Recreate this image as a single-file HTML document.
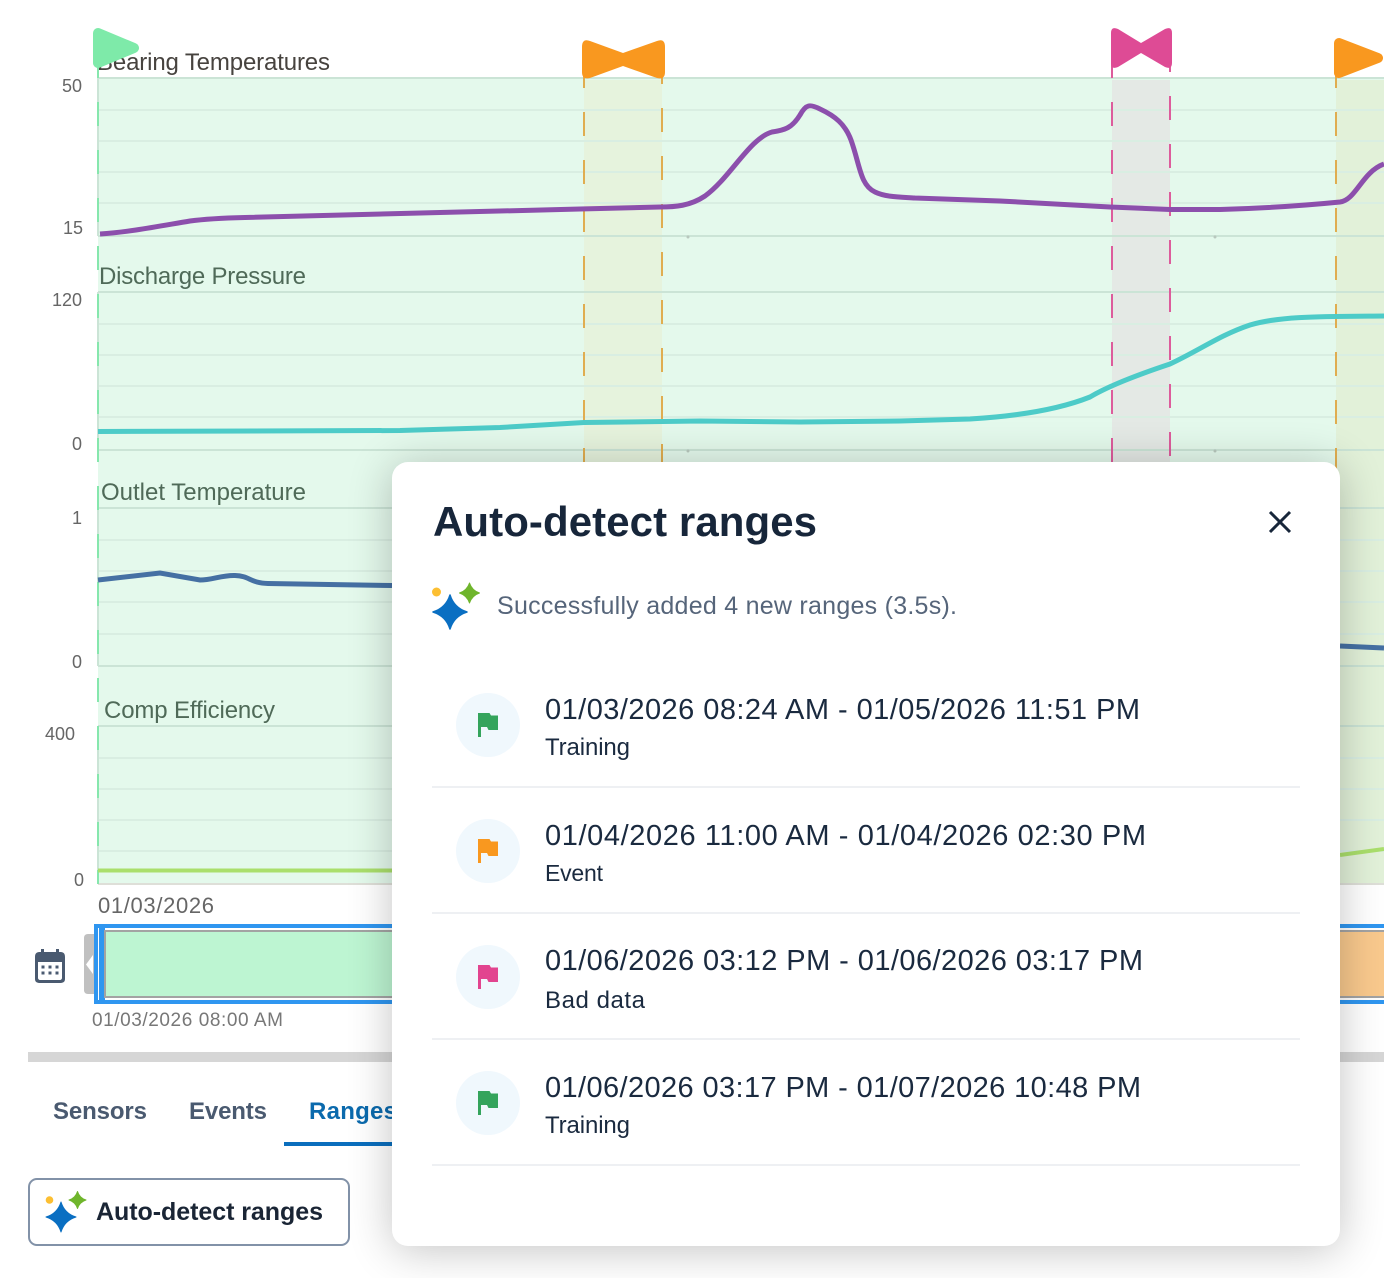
<!DOCTYPE html>
<html><head><meta charset="utf-8"><style>
html,body{margin:0;padding:0;background:#fff;width:1384px;height:1278px;overflow:hidden}
svg{position:absolute;left:0;top:0}
text{font-family:"Liberation Sans",sans-serif}
#modal{position:absolute;left:392px;top:462px;width:948px;height:784px;background:#fff;border-radius:16px;box-shadow:0 4px 44px rgba(0,0,0,.24)}
</style></head><body>
<svg width="1384" height="1278" viewBox="0 0 1384 1278">
<rect x="98" y="78" width="1286" height="806" fill="#e4f9ec"/>
<rect x="584" y="80" width="78" height="804" fill="#e6f3dd"/>
<rect x="1112" y="80" width="58" height="804" fill="#e4e9e5"/>
<rect x="1336" y="80" width="48" height="804" fill="#e2f1d9"/>
<g stroke="#d9eee2" stroke-width="2" fill="none">
<path d="M98 110H1384M98 141H1384M98 172H1384M98 203H1384"/>
<path d="M98 324H1384M98 355H1384M98 386H1384M98 417H1384"/>
<path d="M98 540H1384M98 571H1384M98 602H1384M98 634H1384"/>
<path d="M98 758H1384M98 789H1384M98 820H1384M98 851H1384"/>
</g>
<g stroke="#cbe4d6" stroke-width="2" fill="none">
<path d="M98 78H1384M98 236H1384M98 292H1384M98 450H1384M98 508H1384M98 666H1384M98 726H1384"/>
<path d="M98 78V236M98 292V450M98 508V666M98 726V884"/>
</g>
<path d="M98 884H1384" stroke="#dedfd8" stroke-width="2"/>
<path d="M98 54V884" stroke="#86e7ad" stroke-width="2" stroke-dasharray="24 24" fill="none"/>
<g fill="none" stroke-width="2">
<path d="M584 64V470" stroke="#e0ad50" stroke-dasharray="24 24"/>
<path d="M662 60V470" stroke="#e0ad50" stroke-dasharray="24 24"/>
<path d="M1336 64V470" stroke="#e0ad50" stroke-dasharray="24 24"/>
<path d="M1112 54V470" stroke="#dd5c9c" stroke-dasharray="24 24"/>
<path d="M1170 48V470" stroke="#dd5c9c" stroke-dasharray="24 24"/>
</g>
<path d="M100 234C130 232 160 226 190 221C205 219 225 218 245 217.500L580 209L660 207C675 207 690 206 705 196C730 178 750 138 772 132C785 130 792 128 800 115C806 104 810 104 820 109C835 116 845 124 851 140C860 165 860 185 875 192C885 197 900 197 915 198L1000 201L1110 207L1170 209.500L1220 209.500C1270 208 1310 205 1340 202C1356 200 1362 172 1384 164" fill="none" stroke="#8c4fac" stroke-width="5"/>
<path d="M98 431.500L400 430.500L500 427.500L584 422.500L700 421L800 422L900 421L970 419C1020 416 1060 409 1090 397C1110 385 1140 374 1170 364C1200 350 1220 335 1250 325C1280 316 1320 316.500 1384 316" fill="none" stroke="#4dcbc8" stroke-width="5"/>
<path d="M98 580L160 573L200 580C212 580 222 575 235 575.500C250 576 250 583 268 583.500L392 585.500M1340 646L1384 648" fill="none" stroke="#4570a3" stroke-width="5"/>
<path d="M98 870.500H392M1340 855L1384 849" fill="none" stroke="#aadf6c" stroke-width="4"/>
<circle cx="688" cy="237" r="1.500" fill="#b8c8be"/><circle cx="1215" cy="237" r="1.500" fill="#b8c8be"/>
<circle cx="688" cy="451" r="1.500" fill="#b8c8be"/><circle cx="1215" cy="451" r="1.500" fill="#b8c8be"/>

<text x="97" y="70" font-size="24" fill="#47433f" textLength="233">Bearing Temperatures</text>
<text x="99" y="284" font-size="24" fill="#4f6a58" textLength="207">Discharge Pressure</text>
<text x="101" y="500" font-size="24" fill="#4f6a58" textLength="205">Outlet Temperature</text>
<text x="104" y="718" font-size="24" fill="#4f6a58" textLength="171">Comp Efficiency</text>
<g font-size="18" fill="#666">
<text x="62" y="92" textLength="20">50</text>
<text x="63" y="234" textLength="20">15</text>
<text x="52" y="306" textLength="30">120</text>
<text x="72" y="450">0</text>
<text x="72" y="524">1</text>
<text x="72" y="668">0</text>
<text x="45" y="740" textLength="30">400</text>
<text x="74" y="886">0</text>
</g>
<text x="98" y="913" font-size="22" fill="#666" textLength="116">01/03/2026</text>

<path d="M98 33L134 48L98 63Z" fill="#7eeaa9" stroke="#7eeaa9" stroke-width="10" stroke-linejoin="round"/>
<path d="M582 47Q582 38 590 41L623 53L657 41Q665 38 665 47V72Q665 80 657 78L623 66L590 78Q582 80 582 72Z" fill="#f9981f"/>
<path d="M1111 33Q1111 26 1118 29L1141 43L1165 29Q1172 26 1172 33V63Q1172 70 1165 67L1141 53L1118 67Q1111 70 1111 63Z" fill="#de4b95"/>
<path d="M1339 43L1378 58L1339 73Z" fill="#f9981f" stroke="#f9981f" stroke-width="10" stroke-linejoin="round"/>

<!-- navigator -->
<path d="M94 934H88C85 934 84 936 84 938V990C84 992 85 994 88 994H94Z" fill="#c0c0c0"/>
<path d="M93 955L86 964.500L93 974Z" fill="#fff"/>
<rect x="94" y="924" width="1290" height="4" fill="#2f96f0"/>
<rect x="94" y="1000" width="1290" height="4" fill="#2f96f0"/>
<rect x="94" y="924" width="4" height="80" rx="1" fill="#2f96f0"/>
<rect x="99" y="924" width="6" height="80" fill="#2f96f0"/>
<rect x="104" y="930" width="1280" height="2" fill="#a3a3a3"/>
<rect x="104" y="996" width="1280" height="2" fill="#a3a3a3"/>
<rect x="104" y="930" width="2" height="68" fill="#a3a3a3"/>
<rect x="106" y="932" width="300" height="64" fill="#bdf5d2"/>
<rect x="1330" y="932" width="54" height="64" fill="#f9c98d"/>
<text x="92" y="1026" font-size="19" fill="#777" textLength="191">01/03/2026 08:00 AM</text>
<g fill="#4a5a70">
<path d="M35 957C35 953 37 952 40 952H41V949H44V952H56V949H59V952H60C63 952 65 953 65 957V979C65 982 63 983 60 983H40C37 983 35 982 35 979ZM38 962V978C38 979 39 980 40 980H60C61 980 62 979 62 978V962Z" fill-rule="evenodd"/>
<rect x="41.500" y="965.500" width="3" height="3"/><rect x="48.500" y="965.500" width="3" height="3"/><rect x="55.500" y="965.500" width="3" height="3"/>
<rect x="41.500" y="971.500" width="3" height="3"/><rect x="48.500" y="971.500" width="3" height="3"/><rect x="55.500" y="971.500" width="3" height="3"/>
</g>
<rect x="28" y="1052" width="1356" height="10" fill="#d6d6d6"/>

<text x="53" y="1119" font-size="24" font-weight="700" fill="#4a5a70" textLength="94">Sensors</text>
<text x="189" y="1119" font-size="24" font-weight="700" fill="#4a5a70" textLength="78">Events</text>
<text x="309" y="1119" font-size="24" font-weight="700" fill="#0b6aad" textLength="88">Ranges</text>
<rect x="284" y="1142" width="120" height="4" fill="#0a6ebd"/>

<rect x="29" y="1179" width="320" height="66" rx="8" fill="#fff" stroke="#8292a8" stroke-width="2"/>
<path d="M61 1202Q64.500 1213.500 76 1217Q64.500 1220.500 61 1232Q57.500 1220.500 46 1217Q57.500 1213.500 61 1202Z" fill="#0a6fc2" stroke="#0a6fc2" stroke-width="1" stroke-linejoin="round"/>
<path d="M77.500 1191.500Q79.500 1198 86 1200Q79.500 1202 77.500 1208.500Q75.500 1202 69 1200Q75.500 1198 77.500 1191.500Z" fill="#6fb52c" stroke="#6fb52c" stroke-width="1" stroke-linejoin="round"/>
<circle cx="49.500" cy="1200" r="3.800" fill="#fcbf32"/>
<text x="96" y="1220" font-size="25" font-weight="700" fill="#1a2535" textLength="227">Auto-detect ranges</text>
</svg>

<div id="modal"></div>

<svg width="1384" height="1278" viewBox="0 0 1384 1278">
<text x="433" y="536" font-size="42" font-weight="700" fill="#17263a" textLength="384">Auto-detect ranges</text>
<path d="M1270 512L1290 532M1290 512L1270 532" stroke="#17263a" stroke-width="3" fill="none"/>

<path d="M450 595Q454 608 467 612Q454 616 450 629Q446 616 433 612Q446 608 450 595Z" fill="#0a6fc2" stroke="#0a6fc2" stroke-width="1.500" stroke-linejoin="round"/>
<path d="M469.500 583Q472 590.500 479.500 593Q472 595.500 469.500 603Q467 595.500 459.500 593Q467 590.500 469.500 583Z" fill="#6fb52c" stroke="#6fb52c" stroke-width="1" stroke-linejoin="round"/>
<circle cx="436.500" cy="592" r="4.500" fill="#fcbf32"/>
<text x="497" y="614" font-size="25" fill="#56657a" textLength="460">Successfully added 4 new ranges (3.5s).</text>

<g fill="#f0f8fd">
<circle cx="488" cy="725" r="32"/><circle cx="488" cy="851" r="32"/><circle cx="488" cy="977" r="32"/><circle cx="488" cy="1103" r="32"/>
</g>
<path d="M478 713H489.500L491 715.500H498V730H488.500L487 727H481V737H478Z" fill="#34a45c"/>
<path d="M478 839H489.500L491 841.500H498V856H488.500L487 853H481V863H478Z" fill="#f9981f"/>
<path d="M478 965H489.500L491 967.500H498V982H488.500L487 979H481V989H478Z" fill="#e2448f"/>
<path d="M478 1091H489.500L491 1093.500H498V1108H488.500L487 1105H481V1115H478Z" fill="#34a45c"/>

<g fill="#1a2a3f" font-size="29">
<text x="545" y="719" textLength="595">01/03/2026 08:24 AM - 01/05/2026 11:51 PM</text>
<text x="545" y="845" textLength="601">01/04/2026 11:00 AM - 01/04/2026 02:30 PM</text>
<text x="545" y="970" textLength="598">01/06/2026 03:12 PM - 01/06/2026 03:17 PM</text>
<text x="545" y="1097" textLength="596">01/06/2026 03:17 PM - 01/07/2026 10:48 PM</text>
</g>
<g fill="#1a2a3f" font-size="24">
<text x="545" y="755" textLength="85">Training</text>
<text x="545" y="881" font-size="23" textLength="58">Event</text>
<text x="545" y="1008" textLength="100">Bad data</text>
<text x="545" y="1133" textLength="85">Training</text>
</g>
<path d="M432 787H1300M432 913H1300M432 1039H1300M432 1165H1300" stroke="#eef0f3" stroke-width="2" fill="none"/>
</svg>
</body></html>
